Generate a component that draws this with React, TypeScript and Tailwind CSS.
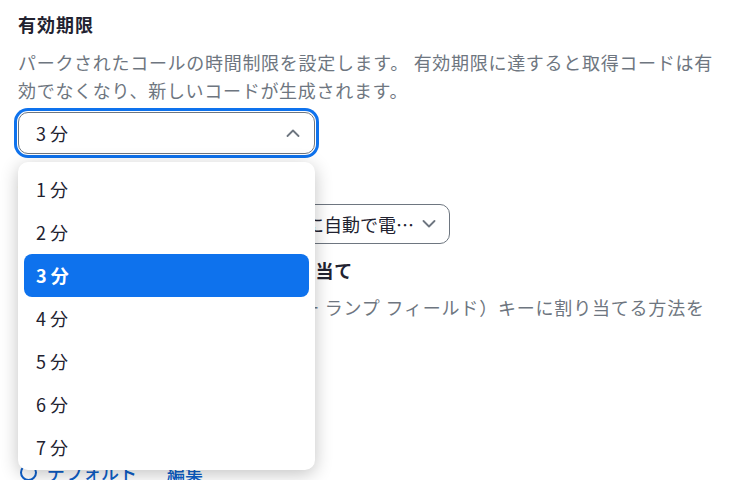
import { useState } from "react";

const OPTIONS = ["1 分", "2 分", "3 分", "4 分", "5 分", "6 分", "7 分", "8 分", "9 分", "10 分"];

function ChevronUp() {
  return (
    <svg width="14" height="8" viewBox="0 0 14 8" fill="none">
      <path d="M1.5 7L7 1.5L12.5 7" stroke="#6e7680" strokeWidth="1.8" strokeLinecap="round" strokeLinejoin="round" />
    </svg>
  );
}

function ChevronDown() {
  return (
    <svg width="14" height="8" viewBox="0 0 14 8" fill="none">
      <path d="M1.5 1L7 6.5L12.5 1" stroke="#6e7680" strokeWidth="1.8" strokeLinecap="round" strokeLinejoin="round" />
    </svg>
  );
}

export default function App() {
  const [value, setValue] = useState("3 分");

  return (
    <div
      className="min-h-screen w-[741px] h-[480px] overflow-hidden bg-white text-[#222230]"
      style={{ fontFamily: '"Noto Sans CJK JP", "Noto Sans", sans-serif' }}
    >
      <div className="px-[18px] pt-[9px]">
        {/* Section 1 — expiry */}
        <h2 className="text-[18px] font-bold tracking-[1px] leading-[30px]">有効期限</h2>
        <p className="mt-[9px] text-[18px] leading-[28px] tracking-[0.7px] text-[#6e7680]">
          パークされたコールの時間制限を設定します。 有効期限に達すると取得コードは有効でなくなり、新しいコードが生成されます。
        </p>

        <div className="relative mt-[8px] w-[297px]">
          <button className="flex h-[42px] w-full items-center justify-between rounded-[10px] border border-[#6e7680] bg-white pl-[17px] pr-[14px] text-[18px] ring-[3px] ring-[#0e72ed] ring-offset-1">
            <span>{value}</span>
            <ChevronUp />
          </button>

          {/* Dropdown */}
          <div className="absolute left-0 top-[50px] z-10 h-[308px] w-[297px] overflow-hidden rounded-[10px] bg-white shadow-[0_4px_18px_rgba(0,0,0,0.24)]">
            <ul className="p-[6px]">
              {OPTIONS.map((o) => (
                <li
                  key={o}
                  onClick={() => setValue(o)}
                  className={
                    o === value
                      ? "flex h-[43px] items-center rounded-[8px] bg-[#0e72ed] pl-[12px] text-[18px] font-bold text-white"
                      : "flex h-[43px] items-center rounded-[8px] pl-[12px] text-[18px] text-[#222230]"
                  }
                >
                  {o}
                </li>
              ))}
            </ul>
          </div>
        </div>

        {/* Section 2 — mostly behind the dropdown */}
        <h3 className="mt-[16px] text-[17px] font-bold leading-[26px]">期限切れ時の動作</h3>
        <button className="mt-[8px] flex h-[40px] w-[432px] items-center justify-between rounded-[10px] border border-[#6e7680] bg-white pl-[17px] pr-[13px] text-[18px]">
          <span className="truncate">取得されなかったコールは期限後に自動で電話を転送します</span>
          <span className="ml-[6px] shrink-0">
            <ChevronDown />
          </span>
        </button>

        {/* Section 3 */}
        <h2 className="mt-[11px] text-[18px] font-bold tracking-[0.6px] leading-[30px]">パークされたコールのキーへの割り当て</h2>
        <p className="mt-[8px] text-[18px] leading-[28px] tracking-[0.8px] text-[#6e7680]">
          パークされたコールを BLF（ビジー ランプ フィールド）キーに割り当てる方法を選択します。
        </p>

        <div className="mt-[12px] flex flex-col gap-[23px] text-[18px] leading-[26px]">
          <label className="flex items-center gap-[10px]">
            <span className="h-[16px] w-[16px] rounded-full border-2 border-[#6e7680]" />
            <span>自動</span>
          </label>
          <label className="flex items-center gap-[10px]">
            <span className="h-[16px] w-[16px] rounded-full border-2 border-[#6e7680]" />
            <span>手動</span>
          </label>
          <div className="flex items-center">
            <label className="flex items-center gap-[10px] pl-[2px] font-medium text-[#0e5fc9]">
              <span className="h-[17px] w-[17px] rounded-full border-2 border-[#0e5fc9]" />
              <span>デフォルト</span>
            </label>
            <a className="ml-[30px] font-medium text-[#0e5fc9]">編集</a>
          </div>
        </div>
      </div>
    </div>
  );
}
